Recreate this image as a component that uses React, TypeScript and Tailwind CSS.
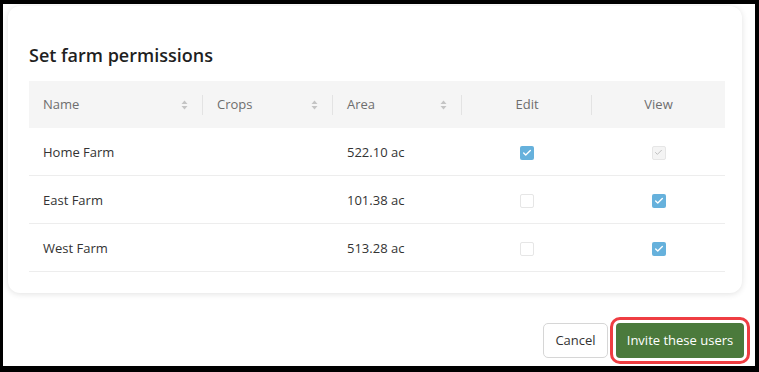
import { Check } from "lucide-react";

type Farm = {
  name: string;
  crops: string;
  area: string;
  edit: boolean;
  view: "on" | "off" | "locked";
};

const farms: Farm[] = [
  { name: "Home Farm", crops: "", area: "522.10 ac", edit: true, view: "locked" },
  { name: "East Farm", crops: "", area: "101.38 ac", edit: false, view: "on" },
  { name: "West Farm", crops: "", area: "513.28 ac", edit: false, view: "on" },
];

const cols = "grid grid-cols-[174px_130px_129px_130px_133px]";

function SortIcon() {
  return (
    <svg width="7" height="10" viewBox="0 0 7 10" className="shrink-0">
      <path d="M3.5 0.5 L6.5 4 L0.5 4 Z" fill="#c4c4c4" />
      <path d="M3.5 9.5 L6.5 6 L0.5 6 Z" fill="#c4c4c4" />
    </svg>
  );
}

function HeaderCell({ label, sortable, last }: { label: string; sortable?: boolean; last?: boolean }) {
  return (
    <div className="relative flex h-full items-center">
      {sortable ? (
        <div className="flex w-full items-center justify-between pl-[14px] pr-[15px]">
          <span>{label}</span>
          <SortIcon />
        </div>
      ) : (
        <div className="flex w-full items-center justify-center">{label}</div>
      )}
      {!last && <div className="absolute right-0 top-[14px] h-[20px] w-px bg-[#e3e3e3]" />}
    </div>
  );
}

function Checkbox({ state }: { state: "on" | "off" | "locked" }) {
  if (state === "on")
    return (
      <div className="flex h-[14px] w-[14px] items-center justify-center rounded-[2px] bg-[#66b1dc]">
        <Check size={10} strokeWidth={3.2} color="#ffffff" />
      </div>
    );
  if (state === "locked")
    return (
      <div className="flex h-[14px] w-[14px] items-center justify-center rounded-[2px] border border-[#e6e6e6] bg-[#f4f4f4]">
        <Check size={9} strokeWidth={2.6} color="#bdbdbd" />
      </div>
    );
  return <div className="h-[14px] w-[14px] rounded-[2px] border border-[#e6e6e6] bg-white" />;
}

export default function App() {
  return (
    <div className="flex h-[372px] w-[759px] flex-col border-b-[6px] border-l-[3px] border-r-[4px] border-t-[4px] border-black bg-white font-['Open_Sans',sans-serif]">
      {/* card */}
      <div className="ml-[5px] mr-[13px] mt-[2px] rounded-[12px] bg-white pb-[21px] pl-[21px] pr-[17px] pt-[37px] shadow-[0_1px_6px_rgba(0,0,0,0.12)]">
        <h2 className="text-[18px] font-semibold leading-[24px] text-[#1f1f1f]">Set farm permissions</h2>

        <div className="mt-[14px]">
          <div className={`${cols} h-[47px] bg-[#f5f5f5] text-[13px] text-[#6e6e6e]`}>
            <HeaderCell label="Name" sortable />
            <HeaderCell label="Crops" sortable />
            <HeaderCell label="Area" sortable />
            <HeaderCell label="Edit" />
            <HeaderCell label="View" last />
          </div>

          {farms.map((f) => (
            <div
              key={f.name}
              className={`${cols} h-[48px] items-center border-b border-[#ededed] pt-[2px] text-[13px] text-[#333333]`}
            >
              <div className="pl-[14px]">{f.name}</div>
              <div className="pl-[15px]">{f.crops}</div>
              <div className="pl-[14px]">{f.area}</div>
              <div className="flex justify-center">
                <Checkbox state={f.edit ? "on" : "off"} />
              </div>
              <div className="flex justify-center">
                <Checkbox state={f.view} />
              </div>
            </div>
          ))}
        </div>
      </div>

      {/* footer buttons */}
      <div className="mr-[11px] mt-[30px] flex justify-end gap-[8px]">
        <button className="h-[35px] w-[65px] rounded-[5px] border border-[#d6d6d6] bg-white text-[13px] text-[#333333]">
          Cancel
        </button>
        <button className="h-[35px] w-[128px] rounded-[4px] bg-[#4b7a3c] text-[13px] text-white outline-[3px] outline-offset-[3px] outline-[#ef3d42] outline-solid">
          Invite these users
        </button>
      </div>
    </div>
  );
}
